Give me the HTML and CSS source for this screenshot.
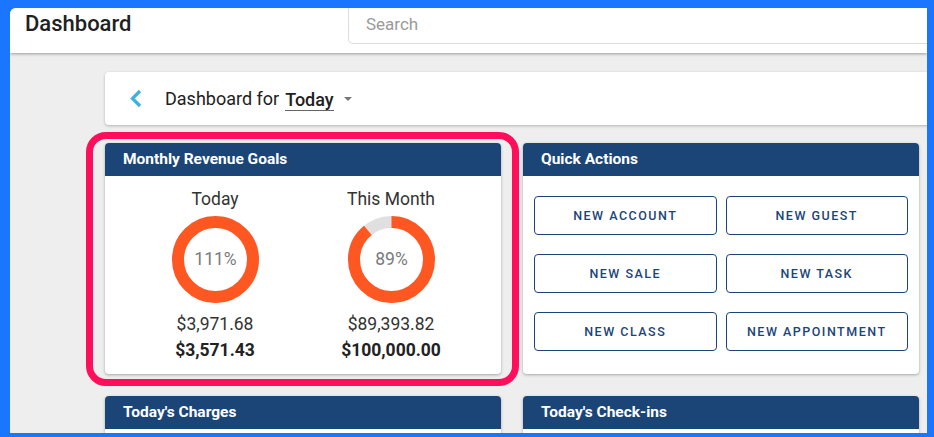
FILE: index.html
```html
<!DOCTYPE html>
<html lang="en">
<head>
<meta charset="utf-8">
<title>Dashboard</title>
<link rel="stylesheet" href="styles.css">
</head>
<body>
<div class="frame">
  <header class="topbar">
    <h1 class="title">Dashboard</h1>
    <div class="search">Search</div>
  </header>
  <main class="content">
    <div class="datebar">
      <svg class="back" width="14" height="19" viewBox="0 0 14 19"><path d="M11 2 L3.5 9.5 L11 17" fill="none" stroke="#3db3dc" stroke-width="3.2" stroke-linecap="butt" stroke-linejoin="miter"/></svg>
      <span class="dfor">Dashboard for</span>
      <span class="dsel">Today</span>
      <span class="caret"></span>
    </div>
    <div class="grid">
      <section class="card goals">
        <div class="card-head">Monthly Revenue Goals</div>
        <div class="goals-body">
          <div class="goal">
            <div class="goal-label">Today</div>
            <svg class="donut" width="87" height="87" viewBox="0 0 87 87">
              <circle cx="43.5" cy="43.5" r="37.5" fill="none" stroke="#e0e0e0" stroke-width="12"/>
              <circle cx="43.5" cy="43.5" r="37.5" fill="none" stroke="#ff5722" stroke-width="12" transform="rotate(-90 43.5 43.5)"/>
              <text x="43.5" y="44.5" class="pct" text-anchor="middle" dominant-baseline="middle">111%</text>
            </svg>
            <div class="amt">$3,971.68</div>
            <div class="amt goal-amt">$3,571.43</div>
          </div>
          <div class="goal">
            <div class="goal-label">This Month</div>
            <svg class="donut" width="87" height="87" viewBox="0 0 87 87">
              <circle cx="43.5" cy="43.5" r="37.5" fill="none" stroke="#e0e0e0" stroke-width="12"/>
              <circle cx="43.5" cy="43.5" r="37.5" fill="none" stroke="#ff5722" stroke-width="12" stroke-dasharray="209.7 300" transform="rotate(-90 43.5 43.5)"/>
              <text x="43.5" y="44.5" class="pct" text-anchor="middle" dominant-baseline="middle">89%</text>
            </svg>
            <div class="amt">$89,393.82</div>
            <div class="amt goal-amt">$100,000.00</div>
          </div>
        </div>
        <div class="highlight"></div>
      </section>
      <section class="card quick">
        <div class="card-head">Quick Actions</div>
        <div class="quick-body">
          <button class="qbtn">NEW ACCOUNT</button>
          <button class="qbtn">NEW GUEST</button>
          <button class="qbtn">NEW SALE</button>
          <button class="qbtn">NEW TASK</button>
          <button class="qbtn">NEW CLASS</button>
          <button class="qbtn">NEW APPOINTMENT</button>
        </div>
      </section>
      <section class="card lower">
        <div class="card-head">Today's Charges</div>
        <div class="lower-body"></div>
      </section>
      <section class="card lower">
        <div class="card-head">Today's Check-ins</div>
        <div class="lower-body"></div>
      </section>
    </div>
  </main>
</div>
</body>
</html>
```

FILE: styles.css
```css
* { box-sizing: border-box; }
html, body { margin: 0; padding: 0; }
body {
  background: #1b76ff;
  padding: 8px 7px 4px 10px;
  height: 437px;
  overflow: hidden;
  font-family: Roboto, "Noto Sans", Arial, sans-serif;
}
.frame {
  position: relative;
  height: 425px;
  overflow: hidden;
  background: #eeeeee;
  border-radius: 6px 0 0 0;
}
.topbar {
  position: relative;
  z-index: 2;
  display: flex;
  align-items: flex-start;
  height: 45px;
  background: #fff;
  box-shadow: 0 1px 3px rgba(0,0,0,0.35);
}
.title {
  flex: 0 0 338px;
  margin: 2px 0 0;
  padding-left: 15px;
  font-size: 22px;
  font-weight: 500;
  line-height: 27px;
  color: #212121;
}
.search {
  flex: 1;
  height: 36px;
  padding-left: 17px;
  border: 1px solid #dcdcdc;
  border-top: none;
  border-right: none;
  border-radius: 0 0 0 5px;
  font-size: 17px;
  line-height: 33px;
  color: #9a9a9a;
}
.content {
  padding: 19px 0 0 95px;
}
.datebar {
  display: flex;
  align-items: center;
  width: 850px;
  height: 53px;
  padding-left: 24px;
  background: #fff;
  border-radius: 4px;
  box-shadow: 0 1px 3px rgba(0,0,0,0.25);
}
.back { flex: 0 0 auto; margin-right: 22px; }
.dfor {
  font-size: 18px;
  color: #212121;
  margin-right: 6px;
  line-height: 21px;
}
.dsel {
  font-size: 18px;
  font-weight: 500;
  color: #212121;
  line-height: 21px;
  border-bottom: 1px solid #666;
  margin-top: 2px;
}
.caret {
  width: 0;
  height: 0;
  margin-left: 10px;
  border-left: 4px solid transparent;
  border-right: 4px solid transparent;
  border-top: 4px solid #777;
}
.grid {
  display: grid;
  grid-template-columns: 396px 396px;
  column-gap: 22px;
  row-gap: 22px;
  margin-top: 18px;
}
.card {
  position: relative;
  background: #fff;
  border-radius: 4px;
  box-shadow: 0 1px 3px rgba(0,0,0,0.3);
}
.card-head {
  height: 33px;
  padding-left: 18px;
  background: #1b4577;
  border-radius: 4px 4px 0 0;
  color: #fff;
  font-size: 15.5px;
  font-weight: 700;
  line-height: 33px;
}
.goals-body {
  display: flex;
  padding: 11px 22px 11px;
}
.goal {
  flex: 1;
  display: flex;
  flex-direction: column;
  align-items: center;
  color: #333;
}
.goal-label {
  font-size: 17.5px;
  line-height: 24px;
  color: #333;
}
.donut { display: block; margin-top: 5px; }
.pct { font-family: Roboto, "Noto Sans", sans-serif; font-size: 17.5px; fill: #7a7a7a; }
.amt {
  font-size: 17.5px;
  line-height: 26px;
  color: #333;
}
.donut + .amt { margin-top: 8px; }
.goal-amt { font-weight: 700; color: #222; }
.highlight {
  position: absolute;
  left: -19px;
  top: -11px;
  right: -18px;
  bottom: -12px;
  border: 7px solid #ff0f5b;
  border-radius: 20px;
  pointer-events: none;
}
.quick-body {
  display: grid;
  grid-template-columns: 1fr 1fr;
  column-gap: 9px;
  row-gap: 19px;
  padding: 20px 11px 23px;
}
.qbtn {
  height: 39px;
  background: #fff;
  border: 1px solid #1b4577;
  border-radius: 4px;
  color: #1b4577;
  font-family: Roboto, "Noto Sans", sans-serif;
  font-size: 12.5px;
  font-weight: 500;
  letter-spacing: 1.5px;
  padding: 0;
}
.lower-body { height: 100px; }
```
